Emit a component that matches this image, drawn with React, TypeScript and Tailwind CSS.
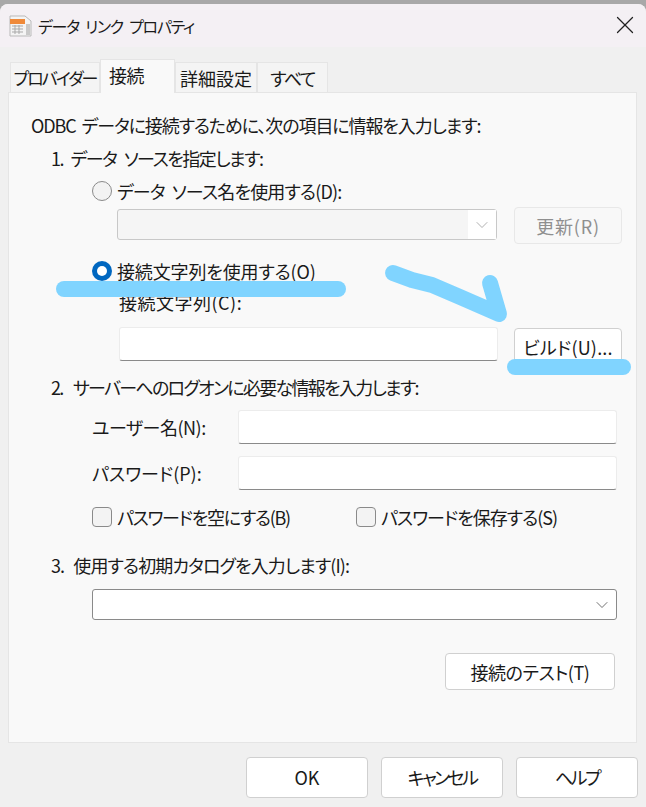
import { ChevronDown, X } from "lucide-react";

const FONT = "font-['Noto_Sans_CJK_JP','Noto_Sans',sans-serif] [font-feature-settings:'palt']";

const Tab = ({ label, width, active }: { label: string; width: string; active?: boolean }) => (
  <div
    className={
      active
        ? `${width} h-[34px] -mb-px z-10 relative bg-[#f9f9f9] border border-b-0 border-[#e5e5e5] pl-[8px] leading-[30px]`
        : `${width} h-[30px] bg-[#f4f4f4] border border-b-0 border-[#e5e5e5] text-center leading-[30px]`
    }
  >
    {label}
  </div>
);

const Radio = ({ checked }: { checked?: boolean }) =>
  checked ? (
    <span className="w-5 h-5 rounded-full bg-[#0067c0] flex items-center justify-center shrink-0">
      <span className="w-2.5 h-2.5 rounded-full bg-white" />
    </span>
  ) : (
    <span className="w-5 h-5 rounded-full bg-[#f3f3f3] border border-[#8a8a8a] shrink-0" />
  );

const Checkbox = () => (
  <span className="w-5 h-5 rounded-[4px] bg-[#f3f3f3] border border-[#8a8a8a] shrink-0" />
);

const Btn = ({ label, className, disabled }: { label: string; className: string; disabled?: boolean }) => (
  <button
    className={`${className} rounded-[4px] border flex items-center justify-center shrink-0 ${
      disabled ? "border-[#e8e8e8] bg-[#f8f8f8] text-[#8f8f8f]" : "border-[#d0d0d0] bg-white text-[#1a1a1a]"
    }`}
  >
    {label}
  </button>
);

const TextBox = ({ className }: { className: string }) => (
  <div className={`${className} bg-white border border-[#ececec] border-b-[#8a8a8a] rounded-[3px] shrink-0`} />
);

export default function App() {
  return (
    <div className={`${FONT} w-[646px] h-[807px] relative overflow-hidden bg-[#a8a8a8] text-[18px] text-[#1a1a1a]`}>
      <div className="mt-1 h-[803px] rounded-t-lg overflow-hidden bg-[#f0f0f0]">
        {/* title bar */}
        <div className="h-[43px] bg-[#f4f0f4] flex items-center pl-[9px] pr-[6px]">
          <svg width="23" height="23" viewBox="0 0 23 23" className="shrink-0">
            <path d="M1 2h15l6 5v15H1z" fill="#f4f4f4" stroke="#b9b9b9" />
            <rect x="1" y="5" width="15" height="5" fill="#ef8a3a" />
            <path d="M3 12h11M3 15h11M3 18h11M6 11v9M10 11v9" stroke="#a9a9a9" />
            <rect x="17" y="10" width="4" height="11" fill="#c9c9c9" />
          </svg>
          <span className="ml-[6px] text-[16px] leading-none tracking-[-1.3px] [word-spacing:4px]">データ リンク プロパティ</span>
          <X className="ml-auto w-[30px] h-[30px] -mt-px text-[#222]" strokeWidth={1} />
        </div>

        {/* tabs */}
        <div className="flex items-end h-[45px] pl-[10px] relative">
          <Tab label="プロバイダー" width="w-[90px] whitespace-nowrap text-[17px] tracking-[-2px]" />
          <Tab label="接続" width="w-[75px] tracking-[-0.5px]" active />
          <Tab label="詳細設定" width="w-[82px]" />
          <Tab label="すべて" width="w-[71px] tracking-[-1.5px]" />
        </div>

        {/* panel */}
        <div className="ml-2 w-[629px] h-[651px] bg-[#f9f9f9] border border-[#e5e5e5] flex flex-col leading-[26px] whitespace-nowrap">
          <div className="mt-[19px] ml-[22px] tracking-[-1.1px] [word-spacing:3px]">ODBC データに接続するために、次の項目に情報を入力します:</div>
          <div className="mt-[7px] ml-[42px] tracking-[-1.5px] [word-spacing:5px]">1. データ ソースを指定します:</div>

          <div className="mt-[7px] ml-[83px] flex items-center gap-[5px] tracking-[-0.85px] [word-spacing:4px]">
            <Radio />
            データ ソース名を使用する(D):
          </div>
          <div className="mt-[3px] ml-[108px] flex items-start h-[37px] gap-[17px]">
            <div className="w-[380px] h-[31px] mt-[2px] bg-[#f5f5f5] border border-[#c8c8c8] rounded-[3px] flex justify-end items-center shrink-0">
              <div className="w-[28px] h-[29px] bg-white flex items-center justify-center">
                <ChevronDown className="w-5 h-5 text-[#a0a0a0]" strokeWidth={1} />
              </div>
            </div>
            <Btn label="更新(R)" className="w-[108px] h-[37px] tracking-[0.8px]" disabled />
          </div>

          <div className="mt-[14px] ml-[83px] flex items-center gap-[5px] tracking-[-0.15px]">
            <Radio checked />
            接続文字列を使用する(O)
          </div>
          <div className="mt-[5px] ml-[110px] tracking-[0.5px]">接続文字列(C):</div>
          <div className="mt-[12px] ml-[110px] flex items-start gap-[16px]">
            <TextBox className="w-[379px] h-[34px]" />
            <Btn label="ビルド(U)..." className="w-[108px] h-[37px] mt-px tracking-[0.2px]" />
          </div>

          <div className="mt-[9px] ml-[42px] tracking-[-1.7px] [word-spacing:8px]">2. サーバーへのログオンに必要な情報を入力します:</div>
          <div className="mt-[10px] ml-[83px] flex items-center">
            <span className="w-[146px] tracking-[-0.5px]">ユーザー名(N):</span>
            <TextBox className="w-[379px] h-[34px]" />
          </div>
          <div className="mt-[12px] ml-[83px] flex items-center">
            <span className="w-[146px]">パスワード(P):</span>
            <TextBox className="w-[379px] h-[34px]" />
          </div>
          <div className="mt-[14px] ml-[83px] flex items-center">
            <Checkbox />
            <span className="ml-[5px] w-[239px] tracking-[-1.3px]">パスワードを空にする(B)</span>
            <Checkbox />
            <span className="ml-[5px] tracking-[-1px]">パスワードを保存する(S)</span>
          </div>

          <div className="mt-[22px] ml-[42px] tracking-[-0.9px] [word-spacing:6px]">3. 使用する初期カタログを入力します(I):</div>
          <div className="mt-[11px] ml-[83px] w-[525px] h-[31px] bg-white border border-[#8a8a8a] rounded-[3px] flex justify-end items-center pr-[4px]">
            <ChevronDown className="w-5 h-5 text-[#555]" strokeWidth={1} />
          </div>
          <Btn label="接続のテスト(T)" className="mt-[33px] ml-[436px] w-[170px] h-[37px] tracking-[-0.4px]" />
        </div>

        {/* bottom buttons */}
        <div className="mt-[14px] ml-[246px] flex gap-[13px]">
          <Btn label="OK" className="w-[122px] h-[41px]" />
          <Btn label="キャンセル" className="w-[122px] h-[41px] tracking-[-2.6px]" />
          <Btn label="ヘルプ" className="w-[122px] h-[41px] tracking-[-2.5px]" />
        </div>
      </div>

      {/* hand drawn highlight marks */}
      <div className="absolute left-[56px] top-[281px] w-[290px] h-[16px] rounded-full bg-[#80d4ff]" />
      <div className="absolute left-[507px] top-[359px] w-[124px] h-[16px] rounded-full bg-[#80d4ff]" />
      <svg className="absolute left-0 top-0 pointer-events-none" width="646" height="807" fill="none">
        <path
          d="M393 273 L412 280 L432 285 L460 297 L499 314 L490 283"
          stroke="#80d4ff"
          strokeWidth="16"
          strokeLinecap="round"
          strokeLinejoin="round"
        />
      </svg>
    </div>
  );
}
